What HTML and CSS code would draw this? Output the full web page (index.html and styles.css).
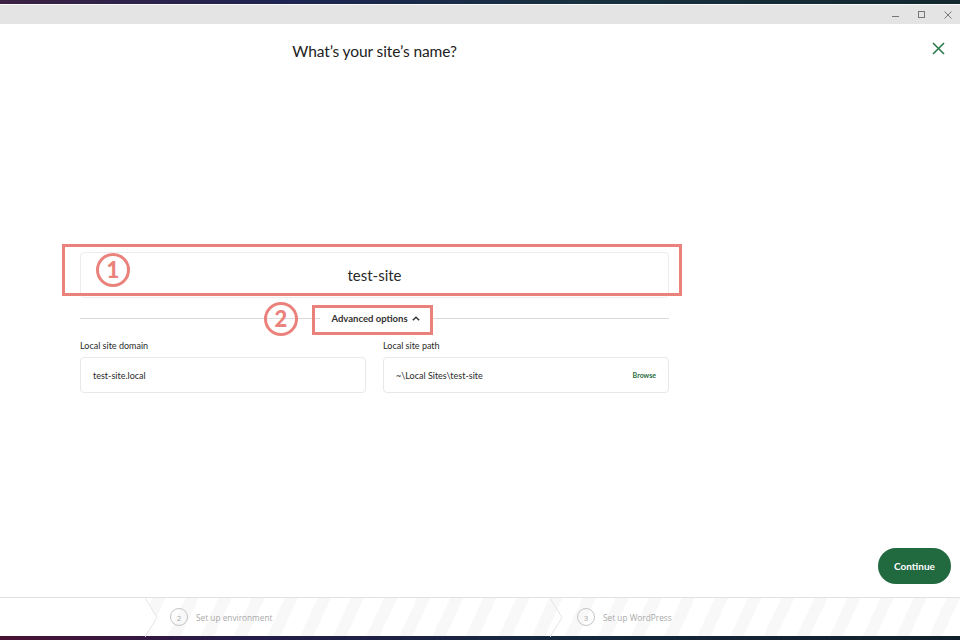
FILE: index.html
```html
<!DOCTYPE html>
<html lang="en">
<head>
<meta charset="utf-8">
<title>Local - New site</title>
<link rel="stylesheet" href="styles.css">
</head>
<body>
<div class="screen">
  <div class="desk desk-top"></div>
  <div class="titlebar">
    <span class="wc wc-min"></span>
    <span class="wc wc-max"></span>
    <svg class="wc-close" width="8" height="8" viewBox="0 0 8 8"><path d="M0.5 0.5 L7.5 7.5 M7.5 0.5 L0.5 7.5" stroke="#777" stroke-width="1" fill="none"/></svg>
  </div>
  <div class="main">
    <div class="content">
      <div class="form">
        <h1 class="title">What’s your site’s name?</h1>
        <div class="name-input">test-site</div>
        <div class="divider">
          <span class="adv">Advanced options <svg width="8" height="5" viewBox="0 0 8 5"><path d="M0.8 4.3 L4 1.2 L7.2 4.3" stroke="#333" stroke-width="1.4" fill="none"/></svg></span>
        </div>
        <div class="fields">
          <div class="field">
            <div class="label">Local site domain</div>
            <div class="box">test-site.local</div>
          </div>
          <div class="field">
            <div class="label">Local site path</div>
            <div class="box box-path"><span>~\Local Sites\test-site</span><span class="browse">Browse</span></div>
          </div>
        </div>
      </div>
      <svg class="close-x" width="13" height="13" viewBox="0 0 13 13"><path d="M1 1 L12 12 M12 1 L1 12" stroke="#2a7a4a" stroke-width="1.6" fill="none"/></svg>
    </div>
    <div class="actions"><button class="continue">Continue</button></div>
    <div class="steps">
      <div class="step step-1">
        <svg class="chev" width="14" height="39" viewBox="0 0 14 39"><path d="M0 0 L12 19.5 L0 39 Z" fill="#fff"/><path d="M0 0 L12 19.5 L0 39" stroke="#e6e6e6" stroke-width="1" fill="none"/></svg>
      </div>
      <div class="step step-2">
        <span class="num">2</span><span class="step-text">Set up environment</span>
        <svg class="chev chev-2" width="14" height="39" viewBox="0 0 14 39"><path d="M0 0 L12 19.5 L0 39" stroke="#e6e6e6" stroke-width="1" fill="none"/></svg>
      </div>
      <div class="step step-3">
        <span class="num">3</span><span class="step-text">Set up WordPress</span>
      </div>
    </div>
  </div>
  <div class="desk desk-bottom"></div>

  <div class="anno anno-box1"></div>
  <div class="anno anno-box2"></div>
  <div class="anno-circle c1">1</div>
  <div class="anno-circle c2">2</div>
</div>
</body>
</html>
```

FILE: styles.css
```css
* { box-sizing: border-box; }
html, body { margin: 0; padding: 0; }
body { width: 960px; height: 640px; overflow: hidden; background: #fff; font-family: "Lato", "Open Sans", sans-serif; color: #2b2b2b; }
.screen { position: relative; width: 960px; height: 640px; display: flex; flex-direction: column; }
.desk { height: 4px; flex: none; }
.desk-top { background: linear-gradient(90deg, #3b2142 0%, #1d2452 30%, #17313f 60%, #13282f 100%); }
.desk-bottom { background: linear-gradient(90deg, #4a1233 0%, #241c4a 25%, #17273f 55%, #10202a 100%); }
.titlebar { height: 20px; flex: none; background: #e4e4e4; border-top: 1px solid #fafafa; display: flex; align-items: center; justify-content: flex-end; padding-right: 8px; gap: 18px; }
.wc { display: block; }
.wc-min { width: 7px; height: 1px; background: #777; margin-top: 4px; }
.wc-max { width: 7px; height: 7px; border: 1px solid #777; margin-left: 1px; }
.wc-close { display: block; margin-left: 1px; }
.main { flex: 1; display: flex; flex-direction: column; }
.content { flex: 1; display: flex; padding-left: 80px; position: relative; }
.form { width: 589px; display: flex; flex-direction: column; }
.title { margin: 18px 0 0; height: 19px; font-size: 15.5px; line-height: 19px; font-weight: 400; text-align: center; color: #222; letter-spacing: -0.1px; }
.name-input { margin-top: 191px; height: 46px; border: 1px solid #ececec; border-radius: 4px; display: flex; align-items: center; justify-content: center; font-size: 15px; color: #2a2a2a; }
.divider { margin-top: 4px; height: 32px; display: flex; align-items: center; justify-content: center; background: linear-gradient(#dadada, #dadada) 0 50% / 100% 1px no-repeat; }
.adv { background: #fff; padding: 0 11px; font-size: 9.5px; font-weight: 700; color: #333; display: flex; align-items: center; gap: 4px; margin-left: 2px; }
.fields { margin-top: 6px; display: grid; grid-template-columns: 286px 286px; column-gap: 17px; }
.label { font-size: 9px; color: #2a2a2a; height: 11px; line-height: 11px; }
.box { margin-top: 6px; height: 36px; border: 1px solid #e8e8e8; border-radius: 4px; display: flex; align-items: center; padding: 0 12px; font-size: 9px; color: #2a2a2a; }
.box-path { justify-content: space-between; }
.browse { font-size: 7px; font-weight: 700; color: #1f6b3c; }
.close-x { position: absolute; right: 15px; top: 18px; }
.actions { height: 36px; display: flex; justify-content: flex-end; padding-right: 9px; margin-bottom: 13px; flex: none; }
.continue { width: 73px; height: 36px; border: none; border-radius: 18px; background: #21693f; color: #fff; font-family: "Lato", sans-serif; font-weight: 700; font-size: 10px; }
.steps { height: 39px; flex: none; border-top: 1px solid #e2e2e2; display: flex; background: repeating-linear-gradient(115deg, #ffffff 0 18px, #f8f8f8 18px 30px); font-family: "Open Sans", sans-serif; }
.step { display: flex; align-items: center; position: relative; }
.step-1 { width: 145px; background: #fff; }
.step-1 .chev { position: absolute; left: 145px; top: 0; }
.step-2 { width: 405px; padding-left: 25px; }
.step-3 { padding-left: 27px; }
.chev-2 { position: absolute; right: -14px; top: 0; }
.num { width: 18px; height: 18px; border: 1px solid #c4c4c4; border-radius: 50%; display: flex; align-items: center; justify-content: center; font-size: 8px; color: #aaa; }
.step-text { margin-left: 8px; font-size: 8.3px; color: #a9a9a9; }
.anno { position: absolute; border: 3px solid #ea817b; }
.anno-box1 { left: 62px; top: 244px; width: 620px; height: 52px; }
.anno-box2 { left: 312px; top: 305px; width: 121px; height: 30px; }
.anno-circle { position: absolute; width: 34px; height: 34px; border: 3px solid #ea817b; border-radius: 50%; color: #ea817b; font-family: "Lato", sans-serif; font-weight: 900; font-size: 22px; display: flex; align-items: center; justify-content: center; line-height: 1; }
.c1 { left: 96px; top: 253px; }
.c2 { left: 264px; top: 302px; }
```
